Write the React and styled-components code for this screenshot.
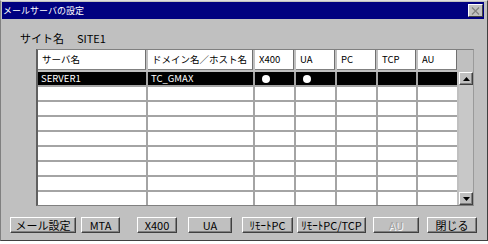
import React from 'react';
import styled, { createGlobalStyle } from 'styled-components';

const GlobalStyle = createGlobalStyle`
  body {
    margin: 0;
    background: #ffffff;
    font-family: 'Noto Sans CJK JP', 'Liberation Sans', sans-serif;
  }
`;

const Window = styled.div`
  box-sizing: border-box;
  width: 488px;
  height: 241px;
  background: #c0c0c0;
  border: 1px solid #404040;
  border-top-color: #dfdfdf;
  border-left-color: #808080;
  padding: 1px 3px 1px 1px;
  display: flex;
  flex-direction: column;
`;

const TitleBar = styled.div`
  height: 17px;
  background: #000080;
  display: flex;
  align-items: center;
  justify-content: space-between;
  padding: 0 1px 0 1px;
`;

const TitleText = styled.span`
  color: #ffffff;
  font-size: 9px;
  line-height: 17px;
`;

const CloseButton = styled.div`
  box-sizing: border-box;
  width: 15px;
  height: 13px;
  background: #c0c0c0;
  border: 1px solid;
  border-color: #ffffff #404040 #404040 #ffffff;
  display: flex;
  align-items: center;
  justify-content: center;
`;

const SiteRow = styled.div`
  display: flex;
  align-items: center;
  gap: 13px;
  height: 14px;
  margin: 12px 0 0 18px;
  font-size: 11px;
  color: #000;
`;

const GridFrame = styled.div`
  box-sizing: border-box;
  width: 438px;
  height: 157px;
  margin: 4px 0 0 34px;
  border: 1px solid #808080;
  border-left: 2px solid #606060;
  border-right-color: #9a9a9a;
  background: #c0c0c0;
  display: flex;
  flex-direction: column;
  gap: 2px;
`;

const HeaderRow = styled.div`
  display: flex;
  gap: 2px;
  height: 20px;
`;

const HeaderCell = styled.div`
  box-sizing: border-box;
  width: ${(p) => p.$w}px;
  height: 20px;
  background: #ffffff;
  border-right: 1px solid #707070;
  border-bottom: 1px solid #808080;
  padding-left: ${(p) => p.$pad}px;
  font-size: 9.5px;
  line-height: 19px;
  color: #000;
  white-space: nowrap;
`;

const Body = styled.div`
  display: flex;
  gap: 2px;
  height: 133px;
`;

const DataGrid = styled.div`
  display: grid;
  grid-template-columns: 108px 105px 39px 39px 39px 38px 39px;
  grid-auto-rows: 13px;
  gap: 2px;
  background: #a4a4a4;
`;

const Cell = styled.div`
  background: ${(p) => (p.$selected ? '#000000' : '#ffffff')};
  color: ${(p) => (p.$selected ? '#ffffff' : '#000000')};
  font-size: 9.5px;
  line-height: 13px;
  padding-left: 3px;
  white-space: nowrap;
  overflow: hidden;
  display: flex;
  align-items: center;
`;

const Dot = styled.span`
  width: 8px;
  height: 8px;
  margin-left: 4px;
  border-radius: 50%;
  background: #ffffff;
`;

const Scrollbar = styled.div`
  width: 14px;
  display: flex;
  flex-direction: column;
  justify-content: space-between;
  background: #c8c8c8;
`;

const ScrollButton = styled.div`
  box-sizing: border-box;
  width: 14px;
  height: 13px;
  background: #c0c0c0;
  border: 1px solid;
  border-color: #ffffff #404040 #404040 #ffffff;
  box-shadow: inset -1px -1px #808080;
  display: flex;
  align-items: center;
  justify-content: center;
`;

const ButtonRow = styled.div`
  display: flex;
  margin-top: 11px;
`;

const Button = styled.div`
  box-sizing: border-box;
  width: ${(p) => p.$w}px;
  height: 16px;
  margin-left: ${(p) => p.$ml}px;
  background: #c0c0c0;
  border: 1px solid;
  border-color: #ffffff #404040 #404040 #ffffff;
  box-shadow: inset -1px -1px #808080;
  display: flex;
  align-items: center;
  justify-content: center;
  font-size: 11px;
  line-height: 14px;
  white-space: nowrap;
  color: ${(p) => (p.$disabled ? '#a0a0a0' : '#000000')};
  text-shadow: ${(p) => (p.$disabled ? '1px 1px #ffffff' : 'none')};
`;

const columns = [
  { title: 'サーバ名', w: 108, pad: 4 },
  { title: 'ドメイン名／ホスト名', w: 105, pad: 4 },
  { title: 'X400', w: 39, pad: 4 },
  { title: 'UA', w: 39, pad: 4 },
  { title: 'PC', w: 39, pad: 4 },
  { title: 'TCP', w: 38, pad: 4 },
  { title: 'AU', w: 39, pad: 4 },
];

const rows = [
  { name: 'SERVER1', host: 'TC_GMAX', x400: true, ua: true },
  ...Array.from({ length: 8 }, () => ({})),
];

const buttons = [
  { label: 'メール設定', w: 66, ml: 8 },
  { label: 'MTA', w: 39, ml: 5 },
  { label: 'X400', w: 40, ml: 17 },
  { label: 'UA', w: 44, ml: 11 },
  { label: 'ﾘﾓｰﾄPC', w: 51, ml: 10 },
  { label: 'ﾘﾓｰﾄPC/TCP', w: 69, ml: 4 },
  { label: 'AU', w: 46, ml: 7, disabled: true },
  { label: '閉じる', w: 50, ml: 8 },
];

const Arrow = ({ up }) => (
  <svg width="7" height="4" viewBox="0 0 7 4">
    <polygon points={up ? '3.5,0 7,4 0,4' : '0,0 7,0 3.5,4'} fill="#000" />
  </svg>
);

export default function App() {
  return (
    <>
      <GlobalStyle />
      <Window>
        <TitleBar>
          <TitleText>メールサーバの設定</TitleText>
          <CloseButton>
            <svg width="9" height="8" viewBox="0 0 9 8">
              <path d="M1 0.5 L8 7.5 M8 0.5 L1 7.5" stroke="#808080" strokeWidth="1.3" />
            </svg>
          </CloseButton>
        </TitleBar>
        <SiteRow>
          <span>サイト名</span>
          <span>SITE1</span>
        </SiteRow>
        <GridFrame>
          <HeaderRow>
            {columns.map((c) => (
              <HeaderCell key={c.title} $w={c.w} $pad={c.pad}>
                {c.title}
              </HeaderCell>
            ))}
          </HeaderRow>
          <Body>
            <DataGrid>
              {rows.map((r, i) => {
                const sel = i === 0;
                return (
                  <React.Fragment key={i}>
                    <Cell $selected={sel}>{r.name}</Cell>
                    <Cell $selected={sel}>{r.host}</Cell>
                    <Cell $selected={sel}>{r.x400 && <Dot />}</Cell>
                    <Cell $selected={sel}>{r.ua && <Dot />}</Cell>
                    <Cell $selected={sel} />
                    <Cell $selected={sel} />
                    <Cell $selected={sel} />
                  </React.Fragment>
                );
              })}
            </DataGrid>
            <Scrollbar>
              <ScrollButton>
                <Arrow up />
              </ScrollButton>
              <ScrollButton>
                <Arrow />
              </ScrollButton>
            </Scrollbar>
          </Body>
        </GridFrame>
        <ButtonRow>
          {buttons.map((b) => (
            <Button key={b.label} $w={b.w} $ml={b.ml} $disabled={b.disabled}>
              {b.label}
            </Button>
          ))}
        </ButtonRow>
      </Window>
    </>
  );
}
